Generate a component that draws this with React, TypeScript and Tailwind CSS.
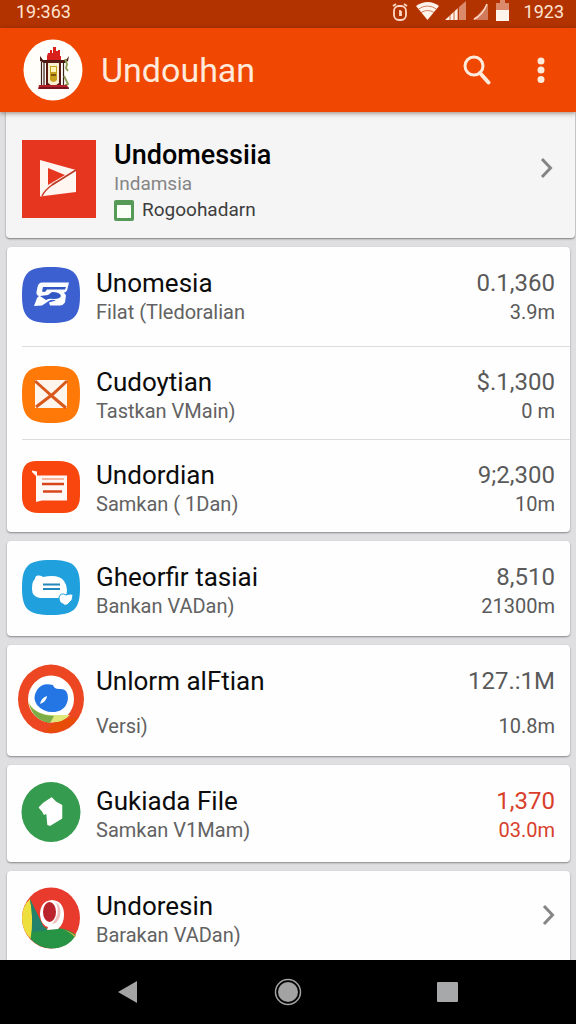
import type { ReactNode } from 'react';

type Item = {
  title: string;
  detail: string;
  icon: ReactNode;
  value?: string;
  size?: string;
  alert?: boolean;
  className: string;
  spaced?: boolean;
};

function Chevron() {
  return (
    <svg viewBox="0 0 16 24" className="h-6 w-4 shrink-0" fill="none" stroke="#858585" strokeWidth="3" aria-hidden="true">
      <path d="M3 3l8.500 9L3 21" />
    </svg>
  );
}

function LogoBadge() {
  return (
    <svg viewBox="0 0 60 62" className="h-[62px] w-[60px] shrink-0" aria-hidden="true">
      <ellipse cx="30" cy="31" rx="29.500" ry="30.500" fill="#fffefa" />
      <path d="M25 14h2V11h2v3h1V8h3v4h2v-1h2v6h1v5H24v-5z" fill="#d8211d" />
      <path d="M17 17l3 4h23l3-4-1 5-3 2H21l-4-2z" fill="#4a1a12" />
      <path d="M18.500 23v26M21 23v26M40.500 23v26" stroke="#3a2118" strokeWidth="1.200" />
      <path d="M23 22h15v26H23z" fill="#5b1a14" />
      <path d="M25 24h11v20q-5.500 5-11 0z" fill="#f6efd2" />
      <path d="M27 27h7v14q-3.500 4-7 0z" fill="#c9a21d" />
      <path d="M28 28h5v5h-5z" fill="#fff3b8" />
      <path d="M28 35h5v2h-5z" fill="#7a5510" />
      <path d="M42 20l2 5-1 4 2 3M41 37l4 8-3 1" stroke="#8a9b51" strokeWidth="1.800" fill="none" />
      <path d="M16 46h28l2 4H15z" fill="#b5202a" />
      <path d="M16 49h30" stroke="#4b1216" strokeWidth="1.200" />
    </svg>
  );
}

function FeaturedIcon() {
  return (
    <svg viewBox="0 0 74 78" className="h-[78px] w-[74px] shrink-0" aria-hidden="true">
      <path fill="#e63620" d="M0 0h74v78H0z" />
      <path d="M18 20l36 10v22l-36 4.500z" fill="#fff5f1" />
      <path d="M26 28v17l17-10z" fill="#e63620" />
      <path d="M29 44q3-4 8-3l-7 5z" fill="#f9c3b8" />
      <path d="M30 45L54 30" stroke="#b93a26" strokeWidth="1.500" fill="none" />
      <path d="M20 56q3-6 10-11" stroke="#c93a26" strokeWidth="1.500" fill="none" />
    </svg>
  );
}

const iconClass = 'h-[58px] w-[58px] shrink-0 overflow-visible';

const BlueIcon = () => (
  <svg viewBox="0 0 58 58" className={iconClass} aria-hidden="true">
    <path d="M0 27C0 5 6-1 29-1s29 6 29 28-6 28-29 28S0 49 0 27z" fill="#3c60d0" />
    <path
      d="M20 14.500h27l-2 8q-1 2-3 2l2 3-1 7q-2 3-5 3H28l-1-3 7-2q-5-2-8 1l-6 4-8 .5 3-8 2-2q-3-1-2.500-4l1-5q1-4.500 4.500-4.500z"
      fill="#fbfdff"
      strokeLinejoin="round"
    />
    <path d="M21 19h23l-1 2.500H25l-2 2.500-3-.5zM18 28l8-1 4-3q8 0 9 4-1 3-7 3-5-1-8 1z" fill="#3157c4" />
  </svg>
);

const MailIcon = () => (
  <svg viewBox="0 0 58 58" className={iconClass} aria-hidden="true">
    <path d="M0 27C0 5 6-1 29-1s29 6 29 28-6 29-29 29S0 49 0 27z" fill="#fe7908" />
    <path d="M13 13h32v28H13z" fill="#fff5ed" />
    <path d="M13 14l9 8 9 8 13 11M45 14L31 27 14 40" fill="none" stroke="#d9581b" strokeWidth="3" />
  </svg>
);

const NoteIcon = () => (
  <svg viewBox="0 0 58 58" className={iconClass} aria-hidden="true">
    <path d="M0 17Q0 1 14 1h22q22 0 22 20v15q0 17-17 17H17Q0 53 0 37z" fill="#f8460e" />
    <path d="M10 10.500l5 1v4h30v25H20l-6 1.500V16l-4-4z" fill="#fff8f5" />
    <path d="M20 19h22" stroke="#f6b49e" strokeWidth="2" />
    <path d="M20 24h22M21 31.500h19" stroke="#d9451b" strokeWidth="2.500" />
  </svg>
);

const ChatIcon = () => (
  <svg viewBox="0 0 58 58" className={iconClass} aria-hidden="true">
    <path d="M0 26C0 5 5-2 29-2s29 7 29 28-6 27-29 27S0 47 0 26z" fill="#20a0dc" />
    <path d="M13 17q0-4 4-3.500 3 0 4 1.500 16-3 21 4 3 4 3 9 0 8-7 8H18q-8-1-8-9 0-8 3-10z" fill="#fff" />
    <path d="M21 22.500h17M21 27h17" stroke="#2188b9" strokeWidth="1.800" />
    <path d="M37 35q2-5 7-2 6-2 7 0 0 6-4 8-3 4-6 1-4-1-4-7z" fill="#fff" stroke="#20a0dc" />
  </svg>
);

const RingIcon = () => (
  <svg viewBox="0 0 58 58" className={iconClass} aria-hidden="true">
    <ellipse cx="29" cy="33" rx="33" ry="34.500" fill="#ec4722" />
    <path d="M35 55l-13 11q22 3 34-15z" fill="#e74c08" />
    <ellipse cx="29" cy="33" rx="23" ry="23.500" fill="#fff" />
    <path d="M6 34q5 14 22 15h20q-8 9-23 7Q10 53 6 34z" fill="#dfe779" />
    <path d="M7 38q7 11 25 12l-4 7Q12 55 7 38z" fill="#7cad49" />
    <path d="M31 19q-11-3-16 5-5 8 0 15 7 8 18 7 12-2 13-14 0-10-9-9-5 0-6-4z" fill="#2376e4" />
    <path d="M18 38q1-6 7-8 0 5-7 8z" fill="#fff" />
  </svg>
);

const GreenIcon = () => (
  <svg viewBox="0 0 58 58" className={iconClass} aria-hidden="true">
    <ellipse cx="29" cy="26" rx="29.500" ry="30" fill="#359b4e" />
    <path
      d="M29.500 12l4.500 4.500 5.500 3V32L28 39l-2-.5L25 27l-3 1-1-2.500-3.500-4L22 17z"
      fill="#fff"
      strokeLinejoin="round"
      stroke="#fff"
      strokeWidth="1.500"
    />
  </svg>
);

const BrowserIcon = () => (
  <svg viewBox="0 0 58 58" className={iconClass} aria-hidden="true">
    <ellipse cx="29" cy="27" rx="29" ry="30.500" fill="#e83a2d" />
    <path d="M8 8Q0 15 0 27q0 13 9 21 4-20-1-40z" fill="#eddf3d" />
    <path d="M8 8l13 27 6 4q14-5 27 5-8 13.500-25 13.500Q17 57 8.500 48 12 28 8 8z" fill="#279344" />
    <path d="M8 8l13 27 5 5-16 2q1-18-2-34z" fill="#23826c" />
    <path d="M10 41l16-2 2 2-18 7z" fill="#279344" />
    <path d="M39 38q9 2 15 7l-1 1q-6-6-14-8z" fill="#e9b23a" />
    <path d="M30 9q-12 1-12 15 1 10 8 12l-1 3 11-1q6-5 6-14 0-14-12-15z" fill="#fff" />
    <path d="M34 11q6 5 4 14-2 7-8 8 9-10 4-22z" fill="#efbdbb" />
    <ellipse cx="27.500" cy="21" rx="6.500" ry="10" fill="#ba222c" />
  </svg>
);

const groups: Item[][] = [
  [
    { title: 'Unomesia', detail: 'Filat (Tledoralian', icon: <BlueIcon />, value: '0.1,360', size: '3.9m', className: 'pt-[21px] pb-5' },
    { title: 'Cudoytian', detail: 'Tastkan VMain)', icon: <MailIcon />, value: '$.1,300', size: '0 m', className: 'border-t border-[#dcdcde] pt-5 pb-3.5' },
    { title: 'Undordian', detail: 'Samkan ( 1Dan)', icon: <NoteIcon />, value: '9;2,300', size: '10m', className: 'border-t border-[#dcdcde] pt-5 pb-3.5' },
  ],
  [{ title: 'Gheorfir tasiai', detail: 'Bankan VADan)', icon: <ChatIcon />, value: '8,510', size: '21300m', className: 'pt-[21px] pb-4' }],
  [{ title: 'Unlorm alFtian', detail: 'Versi)', icon: <RingIcon />, value: '127.:1M', size: '10.8m', className: 'pt-[21px] pb-4', spaced: true }],
  [{ title: 'Gukiada File', detail: 'Samkan V1Mam)', icon: <GreenIcon />, value: '1,370', size: '03.0m', alert: true, className: 'pt-[21px] pb-[18px]' }],
  [{ title: 'Undoresin', detail: 'Barakan VADan)', icon: <BrowserIcon />, className: 'pt-5 pb-2' }],
];

function Row({ item }: { item: Item }) {
  const gap = item.spaced ? 'gap-4' : '';
  return (
    <li className="pl-[15px]">
      <a href="#" className={`flex items-start pr-[15px] ${item.className}`}>
        {item.icon}
        <div className={`ml-4 flex min-w-0 flex-1 flex-col ${gap}`}>
          <h2 className="text-[26px] leading-[30px] text-[#0c0c0c]">{item.title}</h2>
          <p className="text-[20px] leading-7 text-[#626262]">{item.detail}</p>
        </div>
        {item.value ? (
          <div className={`flex flex-col text-right ${gap} ${item.alert ? 'text-[#d8402b]' : 'text-[#5a5a5a]'}`}>
            <span className="text-[24px] leading-[30px]">{item.value}</span>
            <span className="text-[20px] leading-7">{item.size}</span>
          </div>
        ) : (
          <span className="-mr-0.5 flex h-12 items-center">
            <Chevron />
          </span>
        )}
      </a>
    </li>
  );
}

function StatusIcons() {
  return (
    <svg viewBox="0 0 120 24" className="h-6 w-[120px]" aria-hidden="true">
      <g fill="none" stroke="#ffd9c6" strokeWidth="1.800">
        <rect x="2" y="6" width="12" height="14" rx="5" />
        <path d="M1 6l3-2M12 4l3 2M8 10v5h1v-4" />
      </g>
      <path d="M24 6q12-8 23 0L35.500 20z" fill="#fff4ec" />
      <path d="M26.500 9q9-6 18 0M29 12.500q7-4 13 0" stroke="#c4623a" strokeWidth=".8" fill="none" />
      <path d="M53 20L66 8v12z" fill="#fff0e6" />
      <path d="M67 7l7-6v19h-7z" fill="#dc8a6c" />
      <path d="M58 15v5M62 11v9M66 8v12" stroke="#bd4a18" strokeWidth=".8" />
      <path d="M81 20L96 4v16z" fill="#d07a5b" />
      <path d="M82 19q8-3 13-15" stroke="#ffd9c6" strokeWidth="1.500" fill="none" />
      <path d="M108 0h5v3h4v8h-13V3h4z" fill="#dc8a6c" />
      <path d="M104 10h13v11h-13z" fill="#fff4ec" />
    </svg>
  );
}

export default function App() {
  return (
    <div className="flex min-h-screen flex-col bg-[#dfdfe1] font-['Roboto',sans-serif]">
      <div className="flex h-7 items-center bg-[#b33300] pb-1 pl-4 pr-3 text-[18px] leading-6 text-[#ffe3d1]">
        <span className="flex-1">19:363</span>
        <StatusIcons />
        <span className="ml-3">1923</span>
      </div>

      <header className="z-10 flex h-[84px] items-center bg-[#f04702] pl-[23px] pr-[15px] shadow-[0_1px_5px_rgba(70,30,10,0.55)]">
        <LogoBadge />
        <h1 className="ml-[18px] flex-1 text-[34px] leading-10 text-[#ffeadb]">Undouhan</h1>
        <button type="button" aria-label="Search" className="flex h-12 w-12 items-center justify-center">
          <svg viewBox="0 0 28 30" className="h-[30px] w-7" fill="none" stroke="#ffeadb" aria-hidden="true">
            <circle cx="11" cy="11" r="9" strokeWidth="3" />
            <path d="M17 18l8.500 9.500" strokeWidth="4" strokeLinecap="round" />
          </svg>
        </button>
        <button type="button" aria-label="More options" className="ml-5 flex h-12 w-10 items-center justify-center">
          <svg viewBox="0 0 8 28" className="h-7 w-2" fill="#ffeadb" aria-hidden="true">
            <circle cx="4" cy="5" r="3.500" />
            <circle cx="4" cy="14" r="3.500" />
            <circle cx="4" cy="23.500" r="3.500" />
          </svg>
        </button>
      </header>

      <main className="flex flex-1 flex-col">
        <a href="#" className="ml-[6px] mr-px flex items-start rounded-b bg-[#f5f5f5] pb-4 pl-4 pr-5 pt-7 shadow-[0_1px_2px_rgba(0,0,0,0.45)]">
          <FeaturedIcon />
          <div className="ml-[18px] min-w-0 flex-1">
            <h2 className="text-[27px] font-medium leading-[30px] text-black">Undomessiia</h2>
            <p className="text-[19px] leading-7 text-[#858585]">Indamsia</p>
            <p className="flex items-center gap-2 text-[19px] leading-6 text-[#3d3d3d]">
              <svg viewBox="0 0 20 21" className="h-[21px] w-5" aria-hidden="true">
                <rect width="20" height="21" rx="2" fill="#559b57" />
                <path fill="#fafff8" d="M3 5h14v13H3z" />
              </svg>
              Rogoohadarn
            </p>
          </div>
          <span className="flex h-14 items-center">
            <Chevron />
          </span>
        </a>

        <div className="ml-[7px] mr-[6px] mt-[9px] flex flex-1 flex-col gap-[9px]">
          {groups.map((group, i) => (
            <ul
              key={group[0].title}
              className={`bg-[#fefefe] shadow-[0_1px_2px_rgba(0,0,0,0.4)] ${i === groups.length - 1 ? 'flex-1 rounded-t' : 'rounded'}`}
            >
              {group.map((item) => (
                <Row key={item.title} item={item} />
              ))}
            </ul>
          ))}
        </div>
      </main>

      <nav className="z-10 flex h-16 items-center bg-black px-12">
        <button type="button" aria-label="Back" className="flex h-12 flex-1 items-center justify-center">
          <svg viewBox="0 0 20 24" className="h-6 w-5" fill="#a3a3a3" aria-hidden="true">
            <path d="M0 12L19 1v22z" />
          </svg>
        </button>
        <button type="button" aria-label="Home" className="flex h-12 flex-1 items-center justify-center">
          <svg viewBox="0 0 28 28" className="h-7 w-7" aria-hidden="true">
            <circle cx="14" cy="14" r="12.500" fill="none" stroke="#a3a3a3" strokeWidth="1.500" />
            <circle cx="14" cy="14" r="10" fill="#a3a3a3" />
          </svg>
        </button>
        <button type="button" aria-label="Recent apps" className="flex h-12 flex-1 items-center justify-center">
          <svg viewBox="0 0 22 20" className="h-5 w-[22px]" fill="#a7a8aa" aria-hidden="true">
            <rect width="21" height="20" rx="1" />
          </svg>
        </button>
      </nav>
    </div>
  );
}
